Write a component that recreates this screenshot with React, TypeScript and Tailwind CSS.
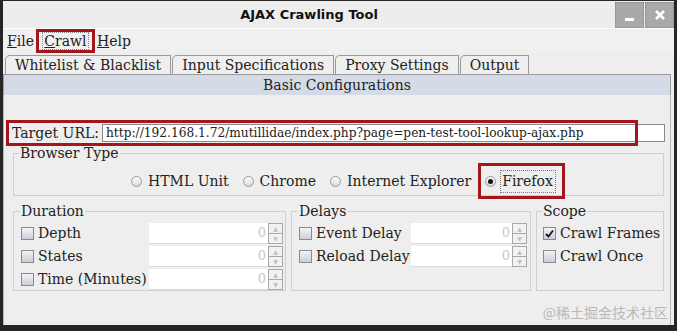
import React from "react";

const serif = { fontFamily: '"DejaVu Serif", serif' };

function Check({ checked = false }: { checked?: boolean }) {
  return (
    <span className="w-[13px] h-[13px] border border-[#8a8a8a] bg-gradient-to-b from-[#f4f4f4] to-[#c9ced8] flex items-center justify-center shrink-0">
      {checked && (
        <svg width="9" height="9" viewBox="0 0 9 9">
          <path d="M1 5 L3.5 7.5 L8 1.5" stroke="#111" strokeWidth="1.8" fill="none" />
        </svg>
      )}
    </span>
  );
}

function Radio({ on = false }: { on?: boolean }) {
  return (
    <span className="w-[11px] h-[11px] rounded-full border border-[#9a9a9a] bg-gradient-to-b from-[#ffffff] to-[#d8d8d8] flex items-center justify-center shrink-0">
      {on && <span className="w-[5px] h-[5px] rounded-full bg-[#111]" />}
    </span>
  );
}

function Spinner({ w }: { w: string }) {
  return (
    <div className={`flex h-[21px] ${w}`}>
      <div className="flex-1 bg-white border-b border-[#d8dce6] flex items-center justify-end pr-[2px] text-[13px] text-[#c8c8c8]">
        0
      </div>
      <div className="w-[15px] flex flex-col border border-[#a8a8a8]">
        <div className="flex-1 border-b border-[#a8a8a8] bg-[#f2f2f2] flex items-center justify-center text-[6px] text-[#c0c0c0]">
          ▲
        </div>
        <div className="flex-1 bg-[#f2f2f2] flex items-center justify-center text-[6px] text-[#c0c0c0]">
          ▼
        </div>
      </div>
    </div>
  );
}

function CheckRow({ label, checked, spin }: { label: string; checked?: boolean; spin?: string }) {
  return (
    <div className="flex items-center h-[23px]">
      <div className="flex items-center gap-[4px] flex-1 whitespace-nowrap">
        <Check checked={checked} />
        <span>{label}</span>
      </div>
      {spin && <Spinner w={spin} />}
    </div>
  );
}

function RadioItem({ label, on }: { label: string; on?: boolean }) {
  return (
    <div className="flex items-center gap-[6px]">
      <Radio on={on} />
      <span>{label}</span>
    </div>
  );
}

export default function App() {
  return (
    <div
      className="w-[677px] h-[331px] bg-[#262626] pt-[1px] pl-[3px] pr-[3px] pb-[6px] text-[14px] text-[#222]"
      style={serif}
    >
      <div className="w-full h-full bg-[#eeeeee] flex flex-col relative overflow-hidden">
        {/* title bar */}
        <div className="h-[27px] flex items-center bg-[#ededed] relative shrink-0">
          <div
            className="flex-1 text-center font-bold text-[13px] text-[#111]"
            style={{ fontFamily: '"DejaVu Sans", sans-serif' }}
          >
            AJAX Crawling Tool
          </div>
          <div className="flex gap-[1px] self-stretch pt-[1px]">
            <div className="w-[29px] bg-[#a9a9a9] border border-dotted border-[#888] flex items-end justify-center pb-[6px]">
              <span className="w-[9px] h-[3px] bg-white" />
            </div>
            <div className="w-[29px] bg-[#a9a9a9] border border-dotted border-[#888] flex items-center justify-center">
              <svg width="12" height="12" viewBox="0 0 12 12">
                <path d="M2 2 L10 10 M10 2 L2 10" stroke="#fff" strokeWidth="2.6" />
              </svg>
            </div>
          </div>
        </div>
        <div className="h-[1px] bg-white shrink-0" />
        {/* menu bar */}
        <div className="h-[24px] flex items-center shrink-0 bg-[#f0f0f0]">
          <span className="ml-[4px]">
            <u>F</u>ile
          </span>
          <span className="ml-[2px] w-[59px] h-[24px] border-[3px] border-[#a3161c] flex items-center justify-center">
            <span className="border border-dotted border-[#888] px-[1px] leading-[16px]">
              <u>C</u>rawl
            </span>
          </span>
          <span className="ml-[2px]">
            <u>H</u>elp
          </span>
        </div>
        {/* tab row */}
        <div className="h-[20px] mt-[1px] flex items-end pl-[2px] shrink-0">
          {["Whitelist & Blacklist", "Input Specifications", "Proxy Settings", "Output"].map((t) => (
            <div
              key={t}
              className="h-[19px] border border-b-0 border-[#9a9a9a] rounded-tl-[5px] bg-[#efefef] px-[9px] flex items-center mr-[1px]"
            >
              {t}
            </div>
          ))}
        </div>
        <div className="h-[21px] mr-[3px] border border-b-0 border-[#9a9a9a] bg-[#d5dbe6] flex items-center justify-center shrink-0">
          Basic Configurations
        </div>
        {/* content */}
        <div className="flex-1 mr-[3px] border-l border-r border-[#b5b5b5] pl-[8px] pr-[6px] pt-[25px]">
          <div className="relative h-[26px] -ml-[6px] flex items-center">
            <div className="w-[632px] h-[26px] border-[3px] border-[#a3161c] flex items-center pl-[3px] shrink-0">
              <span>Target URL:</span>
            </div>
            <div className="absolute left-[96px] top-[4px] h-[18px] w-[563px] bg-white border border-[#8a8a8a] flex items-center pl-[3px] text-[12.2px] text-[#222] overflow-hidden whitespace-nowrap">
              http://192.168.1.72/mutillidae/index.php?page=pen-test-tool-lookup-ajax.php
            </div>
            <div className="absolute left-[0px] top-[0px] w-[632px] h-[26px] border-[3px] border-[#a3161c]" />
          </div>

          <fieldset className="-mt-[3px] ml-[1px] w-[651px] h-[53px] border border-[#d0d0d0] px-[6px]">
            <legend className="px-[1px] ml-[-1px]">Browser Type</legend>
            <div className="flex items-center pl-[111px] gap-[14px] h-[34px]">
              <RadioItem label="HTML Unit" />
              <RadioItem label="Chrome" />
              <RadioItem label="Internet Explorer" />
              <div className="relative">
                <RadioItem label="Firefox" on />
                <div className="absolute -left-[7px] -right-[12px] -top-[8px] -bottom-[7px] border-[3px] border-[#a3161c]" />
                <div className="absolute left-[15px] -right-[3px] -top-[1px] -bottom-[1px] border border-dotted border-[#777]" />
              </div>
            </div>
          </fieldset>

          <div className="flex gap-[5px] mt-[5px] ml-[1px]">
            <fieldset className="w-[273px] h-[90px] border border-[#d0d0d0] pl-[7px] pr-[2px]">
              <legend className="px-[1px] ml-[-1px]">Duration</legend>
              <CheckRow label="Depth" spin="w-[134px]" />
              <CheckRow label="States" spin="w-[134px]" />
              <CheckRow label="Time (Minutes)" spin="w-[134px]" />
            </fieldset>
            <fieldset className="w-[240px] h-[90px] border border-[#d0d0d0] pl-[7px] pr-[3px]">
              <legend className="px-[1px] ml-[-1px]">Delays</legend>
              <CheckRow label="Event Delay" spin="w-[116px]" />
              <CheckRow label="Reload Delay" spin="w-[116px]" />
            </fieldset>
            <fieldset className="w-[128px] h-[90px] border border-[#d0d0d0] pl-[6px]">
              <legend className="px-[1px] ml-[-1px]">Scope</legend>
              <CheckRow label="Crawl Frames" checked />
              <CheckRow label="Crawl Once" />
            </fieldset>
          </div>
        </div>
        <div
          className="absolute right-[6px] bottom-[2px] text-[14px] text-[#b9b9b9]"
          style={{ fontFamily: '"Noto Sans CJK SC", sans-serif' }}
        >
          @稀土掘金技术社区
        </div>
      </div>
    </div>
  );
}
